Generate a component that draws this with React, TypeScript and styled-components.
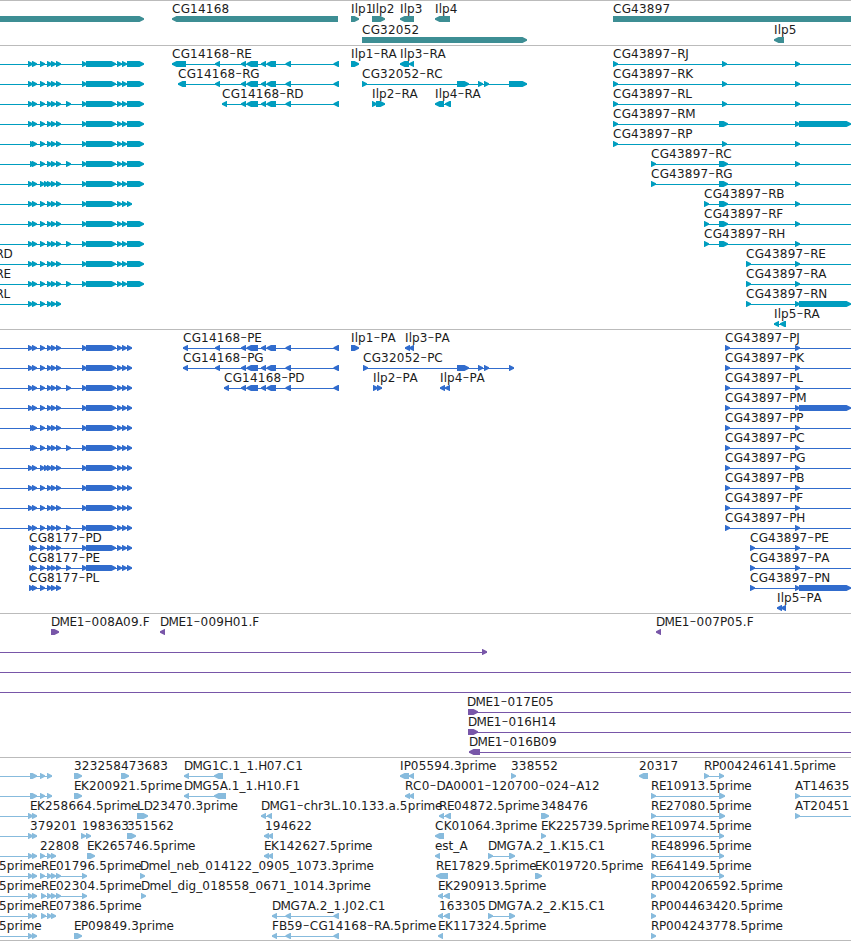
import React from 'react';
import styled, { createGlobalStyle } from 'styled-components';

const GlobalStyle = createGlobalStyle`
  html, body { margin: 0; padding: 0; background: #fff; overflow: hidden; }
`;

const Browser = styled.main`
  display: flex;
  flex-direction: column;
  width: 851px;
  height: 941px;
  box-sizing: border-box;
  overflow: hidden;
  background: #fff;
  border-bottom: 1px solid #bbb;
`;

const Track = styled.section<{ $color: string; $gap: number }>`
  display: flex;
  flex-direction: column;
  flex: none;
  border-top: 1px solid #bbb;
  padding-bottom: ${(p) => p.$gap}px;
  color: ${(p) => p.$color};
`;

const Lane = styled.svg<{ $height: number }>`
  display: block;
  flex: none;
  width: 851px;
  height: ${(p) => p.$height}px;
  overflow: visible;
  fill: currentColor;
`;

const Label = styled.text`
  font-family: 'DejaVu Sans', sans-serif;
  font-weight: 400;
  font-size: 12px;
  font-kerning: none;
  fill: #1c1c1c;
  white-space: pre;
`;

const Dash = styled.tspan`
  font-size: 19px;
  font-weight: 200;
`;

/* Advance widths, in pixels, of the label glyphs; digits take DIGIT. */
const DIGIT = 7.85;
const ADVANCE: Record<string, number> = {
  C: 8.8, G: 9.3, R: 7.9, E: 7.1, D: 8.6, M: 10, H: 8.6, F: 7, P: 7, A: 8, B: 8, I: 3.8, J: 4, K: 7.8, L: 6.7, N: 9, T: 7.3,
  l: 3.2, p: 7.7, r: 5, i: 3.2, m: 11.4, e: 7.3, s: 6.2, t: 4.8, c: 6.7, h: 7.6, a: 7.4, n: 7.6, b: 7.7, d: 7.7, g: 7.7,
  '.': 3.9, _: 6.1, '-': 7,
};

type Dir = 'r' | 'l' | 'n';
type Exon = [number, number, Dir?];
interface Feature {
  label?: string;
  at?: number;
  exons: Exon[];
  line?: [number, number];
}

const FeatureLabel = ({ x, text }: { x: number; text: string }) => {
  let at = x;
  const runs = text.split(/(-)/).filter(Boolean).map((run) => {
    const xs = Array.from(run).map((ch) => {
      const here = at;
      at += ADVANCE[ch] ?? DIGIT;
      return here.toFixed(2);
    });
    return { run, xs: xs.join(' ') };
  });
  return (
    <Label y={12}>
      {runs.map(({ run, xs }, i) =>
        run === '-' ? (
          <Dash key={i} x={xs} y={13}>{run}</Dash>
        ) : (
          <tspan key={i} x={xs} y={12}>{run}</tspan>
        ),
      )}
    </Label>
  );
};

const exonPoints = ([a, b, dir = 'r']: Exon) => {
  if (dir === 'n') return `${a},15 ${b},15 ${b},21 ${a},21`;
  const tip = Math.min(4.5, b - a - 0.5);
  return dir === 'r'
    ? `${a},15 ${b - tip},15 ${b},17.2 ${b},18.8 ${b - tip},21 ${a},21`
    : `${b},15 ${a + tip},15 ${a},17.2 ${a},18.8 ${a + tip},21 ${b},21`;
};

const LaneRow = ({ features, height = 20 }: { features: Feature[]; height?: number }) => (
  <Lane $height={height}>
    {features.map((f, i) => (
      <g key={i}>
        {f.line && <rect x={f.line[0]} y={18} width={f.line[1] - f.line[0]} height={1} />}
        {f.exons.map((e, j) => (
          <polygon key={j} points={exonPoints(e)} />
        ))}
      </g>
    ))}
    {features.map((f, i) => (f.label ? <FeatureLabel key={i} x={f.at ?? 0} text={f.label} /> : null))}
  </Lane>
);

const EDGE = 851;

const feat = (label: string, at: number, exons: Exon[], end?: number): Feature => ({
  label,
  at,
  exons,
  line: exons.length > 1 || end ? [exons[0][0], end ?? exons[exons.length - 1][1]] : undefined,
});
const left = (...spans: [number, number][]): Exon[] => spans.map(([a, b]) => [a, b, 'l'] as Exon);

/* CG8177 isoforms share one exon chain and differ in a few optional exons. */
interface IsoformOptions {
  first?: number;
  from?: number;
  extra?: boolean;
  close?: boolean;
  utr?: boolean;
  short?: boolean;
  label?: string;
  at?: number;
}
const cg8177 = ({ first = 28, from = 0, extra, close, utr, short, label, at }: IsoformOptions): Feature => {
  const exons: Exon[] = [[first, first + 5], [32, 37], [40, 45], [47, 52], [51, 56], [56, 61]];
  if (close) exons.push([44, 49]);
  if (extra) exons.push([66, 71]);
  if (!short) exons.push([82, 87], [86, 116], [117, 122], [122, 127], [127, utr ? 144 : 132]);
  return { label, at, exons, line: [from, short ? 61 : utr ? 140 : 132] };
};

const cg14168Tail = left([241, 246], [246.5, 258], [261, 266], [266.5, 276], [285.5, 291], [333.5, 339]);
const cg14168 = (label: string, at: number, head: [number, number][]): Feature =>
  feat(label, at, [...left(...head), ...cg14168Tail]);

const cg43897 = (suffix: string, at: number, mid?: [number, number], coding?: boolean): Feature => {
  const exons: Exon[] = [[at, at + 5]];
  if (mid) exons.push(mid);
  exons.push([795, 800]);
  if (coding) exons.push([799, 851]);
  return feat(`CG43897-${suffix}`, at, exons, EDGE);
};

const genes: Feature[][] = [
  [
    { exons: [[0, 144]] },
    feat('CG14168', 172, left([172, 338])),
    feat('Ilp1', 351, [[351, 359]]),
    feat('Ilp2', 372, [[372, 385]]),
    feat('Ilp3', 400, left([400, 414])),
    feat('Ilp4', 435, left([435, 450])),
    feat('CG43897', 613, [[613, EDGE, 'n']]),
  ],
  [feat('CG32052', 362, [[362, 527]]), feat('Ilp5', 774, left([774, 784]))],
];

const small: [number, number] = [722, 727];
const wide: [number, number] = [719, 728];

const transcripts: Feature[][] = [
  [
    cg8177({ utr: true }),
    cg14168('CG14168-RE', 172, [[172, 186], [215, 220]]),
    feat('Ilp1-RA', 351, [[351, 359]]),
    feat('Ilp3-RA', 400, left([400, 409], [409, 414])),
    cg43897('RJ', 613, small),
  ],
  [
    cg8177({ utr: true }),
    cg14168('CG14168-RG', 178, [[178, 186], [215, 220]]),
    feat('CG32052-RC', 362, [[362, 367], [457, 469], [478, 483], [484, 489], [509, 527]]),
    cg43897('RK', 613, small),
  ],
  [
    cg8177({ utr: true, extra: true }),
    cg14168('CG14168-RD', 222, [[222, 227]]),
    feat('Ilp2-RA', 372, [[372, 377], [376, 385]]),
    feat('Ilp4-RA', 435, left([435, 444], [445, 451])),
    cg43897('RL', 613, small),
  ],
  [cg8177({ utr: true }), cg43897('RM', 613, wide, true)],
  [cg8177({ utr: true, first: 30 }), cg43897('RP', 613, small)],
  [cg8177({ utr: true, first: 30, extra: true }), cg43897('RC', 651, wide)],
  [cg8177({ utr: true, close: true }), cg43897('RG', 651, wide)],
  [cg8177({}), cg43897('RB', 704, wide)],
  [cg8177({ utr: true }), cg43897('RF', 704, wide)],
  [cg8177({ utr: true, extra: true }), cg43897('RH', 704, wide)],
  [cg8177({ utr: true, label: 'RD', at: -4.5 }), cg43897('RE', 746)],
  [cg8177({ utr: true, extra: true, label: 'RE', at: -4.5 }), cg43897('RA', 746)],
  [cg8177({ short: true, label: 'RL', at: -4.5 }), cg43897('RN', 746, undefined, true)],
  [feat('Ilp5-RA', 774, left([774, 779], [780, 786]))],
];

const proteins: Feature[][] = [
  [
    cg8177({}),
    cg14168('CG14168-PE', 183, [[183, 188], [215, 220]]),
    feat('Ilp1-PA', 351, [[351, 359]]),
    feat('Ilp3-PA', 405, left([405, 410], [409, 414])),
    cg43897('PJ', 725),
  ],
  [
    cg8177({}),
    cg14168('CG14168-PG', 183, [[183, 188], [215, 220]]),
    feat('CG32052-PC', 363, [[363, 368], [457, 469], [478, 483], [484, 489], [509, 514]]),
    cg43897('PK', 725),
  ],
  [
    cg8177({ extra: true }),
    cg14168('CG14168-PD', 224, [[224, 229]]),
    feat('Ilp2-PA', 373, [[373, 378], [377, 382]]),
    feat('Ilp4-PA', 440, left([440, 445], [445, 450])),
    cg43897('PL', 725),
  ],
  [cg8177({}), cg43897('PM', 725, undefined, true)],
  [cg8177({ first: 30 }), cg43897('PP', 725)],
  [cg8177({ first: 30, extra: true }), cg43897('PC', 725)],
  [cg8177({ close: true }), cg43897('PG', 725)],
  [cg8177({}), cg43897('PB', 725)],
  [cg8177({}), cg43897('PF', 725)],
  [cg8177({ extra: true }), cg43897('PH', 725)],
  [cg8177({ first: 29, from: 29, label: 'CG8177-PD', at: 29 }), cg43897('PE', 750)],
  [cg8177({ first: 29, from: 29, extra: true, label: 'CG8177-PE', at: 29 }), cg43897('PA', 750)],
  [
    cg8177({ first: 29, from: 29, short: true, label: 'CG8177-PL', at: 29 }),
    cg43897('PN', 750, undefined, true),
  ],
  [feat('Ilp5-PA', 777, left([777, 782], [781, 786]))],
];

const clones: Feature[][] = [
  [
    feat('DME1-008A09.F', 51, [[51, 59]]),
    feat('DME1-009H01.F', 160, left([160, 165])),
    feat('DME1-007P05.F', 656, left([656, 661])),
  ],
  [{ exons: [[482, 487]], line: [0, 487] }],
  [{ exons: [], line: [0, EDGE] }],
  [{ exons: [], line: [0, EDGE] }],
  [feat('DME1-017E05', 467, [[468, 478]], EDGE)],
  [feat('DME1-016H14', 468, [[468, 478]], EDGE)],
  [feat('DME1-016B09', 469, left([469, 480]), EDGE)],
];

const longLead: Feature = { exons: [[30, 37], [40, 45], [47, 52]], line: [0, 52] };
const lead = (label?: string, at?: number): Feature => ({ label, at, exons: [[28, 33], [32, 37]], line: [0, 37] });
const re = (label: string, end = 724): Feature => feat(label, 651, [[651, 656], [719, end]]);
const jChain = left([272, 277], [285.5, 291], [333.5, 339]);

const ests: Feature[][] = [
  [
    longLead,
    feat('323258', 74, [[74, 82]]),
    feat('473683', 121, [[121, 129]]),
    feat('DMG1C.1_1.H07.C1', 184, left([184, 189], [214, 223])),
    feat('IP05594.3prime', 400, left([400, 409], [409, 414])),
    feat('338552', 511, [[511, 516]]),
    feat('20317', 639, left([639, 648])),
    feat('RP004246141.5prime', 704, [[704, 709], [719, 724]]),
  ],
  [
    longLead,
    feat('EK200921.5prime', 74, [[74, 82]]),
    feat('DMG5A.1_1.H10.F1', 184, left([184, 189], [214, 226])),
    feat('RC0-DA0001-120700-024-A12', 405, left([405, 410], [409, 414])),
    re('RE10913.5prime', 725),
    feat('AT14635', 795, [[795, 800]], EDGE),
  ],
  [
    lead('EK258664.5prime', 30),
    feat('LD23470.3prime', 137, [[137, 148]]),
    feat('DMG1-chr3L.10.133.a.5prime', 261, left([261, 266], [267, 272])),
    feat('RE04872.5prime', 439, left([439, 444], [445, 451])),
    feat('348476', 541, [[541, 549]]),
    re('RE27080.5prime', 725),
    feat('AT20451', 795, [[795, 800]], EDGE),
  ],
  [
    lead('379201', 30),
    feat('198363', 82, [[81, 86], [86, 91]]),
    feat('351562', 127, [[127, 136]]),
    feat('194622', 265, left([264, 269], [268, 273])),
    feat('CK01064.3prime', 435, left([435, 444])),
    feat('EK225739.5prime', 541, [[541, 546]]),
    re('RE10974.5prime'),
  ],
  [
    lead(),
    feat('22808', 40, [[40, 45], [47, 52], [51, 56]]),
    feat('EK265746.5prime', 87, [[87, 95]]),
    feat('EK142627.5prime', 264, left([264, 269], [268, 273])),
    feat('est_A', 435, left([435, 440])),
    feat('DMG7A.2_1.K15.C1', 488, [[488, 493], [509, 515]]),
    re('RE48996.5prime'),
  ],
  [
    lead('5prime', -1),
    feat('RE01796.5prime', 41, [[40, 45], [47, 52], [51, 56], [56, 61], [82, 87]]),
    feat('Dmel_neb_014122_0905_1073.3prime', 140, [[140, 145]]),
    feat('RE17829.5prime', 436, left([436, 448])),
    feat('EK019720.5prime', 535, [[535, 542]]),
    re('RE64149.5prime'),
  ],
  [
    lead('5prime', -1),
    feat('RE02304.5prime', 41, [[41, 46], [47, 52], [51, 56], [56, 61], [82, 87]]),
    feat('Dmel_dig_018558_0671_1014.3prime', 141, [[141, 146]]),
    feat('EK290913.5prime', 438, left([438, 443], [444, 450])),
    feat('RP004206592.5prime', 651, [[651, 656]]),
  ],
  [
    lead('5prime', -1),
    feat('RE07386.5prime', 41, [[41, 46], [47, 52], [51, 56]]),
    feat('DMG7A.2_1.J02.C1', 272, jChain),
    feat('163305', 439, left([438, 443], [444, 450])),
    feat('DMG7A.2_2.K15.C1', 488, [[488, 493], [509, 515]]),
    feat('RP004463420.5prime', 651, [[651, 656]]),
  ],
  [
    lead('5prime', -1),
    feat('EP09849.3prime', 74, [[74, 82]]),
    feat('FB59-CG14168-RA.5prime', 272, jChain),
    feat('EK117324.5prime', 438, left([438, 443])),
    feat('RP004243778.5prime', 651, [[651, 656]]),
  ],
];

const tracks = [
  { id: 'genes', color: '#3d8e94', gap: 2, height: 21, lanes: genes },
  { id: 'transcripts', color: '#009dbf', gap: 3, height: 20, lanes: transcripts },
  { id: 'proteins', color: '#316ccd', gap: 3, height: 20, lanes: proteins },
  { id: 'clones', color: '#7856a8', gap: 3, height: 20, lanes: clones },
  { id: 'ests', color: '#87bbdd', gap: 2, height: 20, lanes: ests },
];

export default function App() {
  return (
    <>
      <GlobalStyle />
      <Browser>
        {tracks.map((t) => (
          <Track key={t.id} $color={t.color} $gap={t.gap}>
            {t.lanes.map((features, i) => (
              <LaneRow key={i} features={features} height={t.height} />
            ))}
          </Track>
        ))}
      </Browser>
    </>
  );
}
